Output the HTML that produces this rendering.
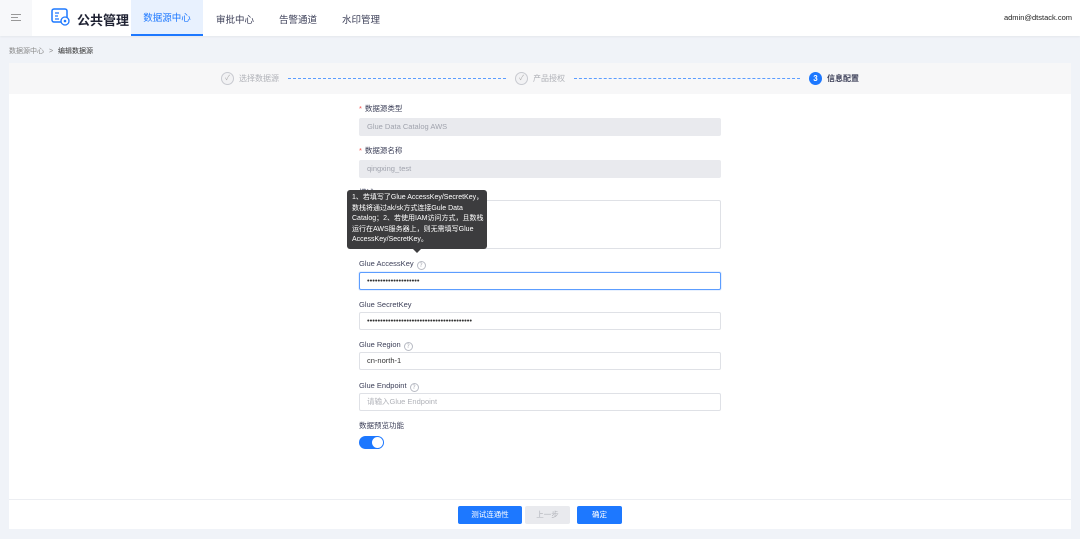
<!DOCTYPE html>
<html><head><meta charset="utf-8"><style>
*{box-sizing:border-box;margin:0;padding:0}
body{width:1080px;height:539px;overflow:hidden;background:#f0f3f8;font-family:"Liberation Sans","Noto Sans CJK SC",sans-serif;position:relative;color:#3f4150}
.a{position:absolute}
.hdr{left:0;top:0;width:1080px;height:36px;background:#fff;box-shadow:0 1px 2px rgba(0,0,0,.05)}
.lbl{font-size:7.5px;color:#3d4059;left:359px;line-height:10px}
.inp{left:359px;width:362px;height:18px;border:1px solid #dfe1e6;border-radius:2px;background:#fff;font-size:7.5px;padding-left:7px;line-height:16px;color:#333}
.dis{background:#e9eaee;border-color:#e9eaee;color:#a0a3ad}
.q{display:inline-block;width:9px;height:9px;border:1px solid #b8bbc4;border-radius:50%;font-size:6px;line-height:7px;text-align:center;color:#a8abb4;vertical-align:-1px;margin-left:3px;font-family:"DejaVu Sans",sans-serif}
.star{color:#f5524c;margin-right:3px}
.btn{top:506px;height:18px;border-radius:2px;font-size:7.5px;line-height:18px;text-align:center;color:#fff;background:#1d78ff}
.ck{width:13px;height:13px;border:1px solid #c8cad0;border-radius:50%;top:72px;background:#f2f2f4;font-size:7px;color:#aaa;text-align:center;line-height:11px}
.dash{top:78px;height:0;border-top:1px dashed #5c9dff}
</style></head><body>
<div class="a hdr"></div>
<div class="a" style="left:0;top:0;width:32px;height:36px;background:#f7f8fa"></div>
<div class="a" style="left:11px;top:14px;width:10px;border-top:1px solid #999"></div>
<div class="a" style="left:11px;top:17px;width:7px;border-top:1px solid #999"></div>
<div class="a" style="left:11px;top:20px;width:10px;border-top:1px solid #999"></div>
<svg class="a" style="left:51px;top:8px" width="20" height="19" viewBox="0 0 20 19"><rect x="1" y="1" width="15" height="13" rx="2" fill="none" stroke="#1d78ff" stroke-width="1.5"/><path d="M4 5h4M4 8h3M4 11h4" stroke="#1d78ff" stroke-width="1.2"/><circle cx="14" cy="13" r="4" fill="#fff" stroke="#1d78ff" stroke-width="1.3"/><circle cx="14" cy="13" r="1.3" fill="#1d78ff"/></svg>
<div class="a" style="left:77px;top:10px;font-size:13px;font-weight:bold;color:#1f2233">公共管理</div>
<div class="a" style="left:131px;top:0;width:72px;height:36px;background:#e8f1fe;border-bottom:2px solid #1d78ff;font-size:9.5px;color:#1d78ff;text-align:center;line-height:38px">数据源中心</div>
<div class="a" style="left:216px;top:12px;font-size:9.5px;color:#3d4059">审批中心</div>
<div class="a" style="left:279px;top:12px;font-size:9.5px;color:#3d4059">告警通道</div>
<div class="a" style="left:342px;top:12px;font-size:9.5px;color:#3d4059">水印管理</div>
<div class="a" style="right:8px;top:13px;font-size:7.5px;color:#222">admin@dtstack.com</div>
<div class="a" style="left:9px;top:46px;font-size:7px;color:#888">数据源中心 <span style="margin:0 3px">&gt;</span> <span style="color:#333">编辑数据源</span></div>
<div class="a" style="left:9px;top:63px;width:1062px;height:466px;background:#fff"></div>
<div class="a" style="left:9px;top:63px;width:1062px;height:31px;background:#f7f7f8"></div>
<div class="a ck" style="left:221px">✓</div>
<div class="a" style="left:239px;top:73px;font-size:8px;color:#b0b2b8">选择数据源</div>
<div class="a dash" style="left:288px;width:218px"></div>
<div class="a ck" style="left:515px">✓</div>
<div class="a" style="left:533px;top:73px;font-size:8px;color:#b0b2b8">产品授权</div>
<div class="a dash" style="left:574px;width:226px"></div>
<div class="a" style="left:809px;top:72px;width:13px;height:13px;border-radius:50%;background:#1d78ff;color:#fff;font-size:8px;font-weight:bold;text-align:center;line-height:13px">3</div>
<div class="a" style="left:827px;top:73px;font-size:8px;font-weight:bold;color:#3d4059">信息配置</div>

<div class="a lbl" style="top:104px"><span class="star">*</span>数据源类型</div>
<div class="a inp dis" style="top:118px">Glue Data Catalog AWS</div>
<div class="a lbl" style="top:146px"><span class="star">*</span>数据源名称</div>
<div class="a inp dis" style="top:160px">qingxing_test</div>
<div class="a lbl" style="top:188px">描述</div>
<div class="a inp" style="top:200px;height:49px"></div>
<div class="a lbl" style="top:259px">Glue AccessKey<span class="q">?</span></div>
<div class="a inp" style="top:272px;border-color:#5c9dff;box-shadow:0 0 0 1px rgba(29,120,255,.1)">••••••••••••••••••••</div>
<div class="a lbl" style="top:300px">Glue SecretKey</div>
<div class="a inp" style="top:312px">••••••••••••••••••••••••••••••••••••••••</div>
<div class="a lbl" style="top:340px">Glue Region<span class="q">?</span></div>
<div class="a inp" style="top:352px">cn-north-1</div>
<div class="a lbl" style="top:381px">Glue Endpoint<span class="q">?</span></div>
<div class="a inp" style="top:393px;color:#b0b2b8">请输入Glue Endpoint</div>
<div class="a lbl" style="top:421px">数据预览功能</div>
<div class="a" style="left:359px;top:436px;width:25px;height:13px;border-radius:7px;background:#1d78ff"></div>
<div class="a" style="left:372px;top:437px;width:11px;height:11px;border-radius:50%;background:#fff"></div>

<div class="a" style="left:347px;top:190px;width:140px;height:59px;background:#3c3c3e;border-radius:3px;color:#fff;font-size:7px;line-height:10.6px;padding:3px 5px;white-space:nowrap">1、若填写了Glue AccessKey/SecretKey，<br>数栈将通过ak/sk方式连接Gule Data<br>Catalog；2、若使用IAM访问方式，且数栈<br>运行在AWS服务器上，则无需填写Glue<br>AccessKey/SecretKey。</div>
<div class="a" style="left:413px;top:249px;width:0;height:0;border-left:4px solid transparent;border-right:4px solid transparent;border-top:4px solid #3c3c3e"></div>

<div class="a" style="left:9px;top:499px;width:1062px;border-top:1px solid #eceef2"></div>
<div class="a btn" style="left:458px;width:64px">测试连通性</div>
<div class="a btn" style="left:525px;width:45px;background:#e9eaee;color:#b0b2b8">上一步</div>
<div class="a btn" style="left:577px;width:45px">确定</div>
</body></html>
